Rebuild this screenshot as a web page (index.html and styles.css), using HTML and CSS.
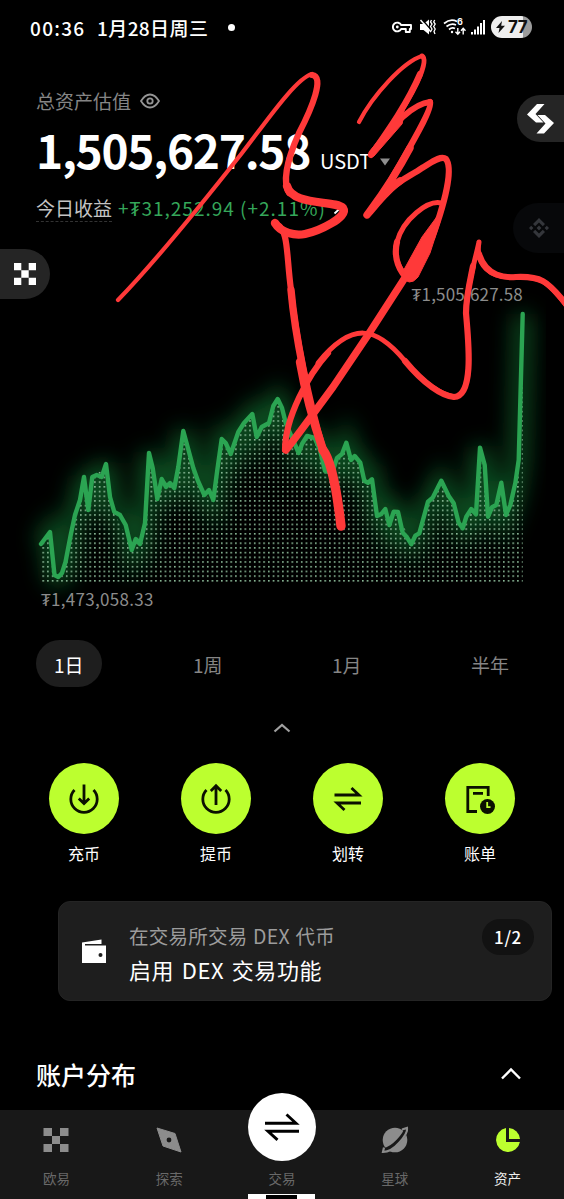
FILE: index.html
```html
<!DOCTYPE html>
<html lang="zh-CN">
<head>
<meta charset="UTF-8">
<meta name="viewport" content="width=device-width, initial-scale=1.0">
<title>资产</title>
<link rel="stylesheet" href="styles.css">
</head>
<body>
<div class="phone">

  <div class="status-bar">
    <span class="time">00:36</span>
    <span class="date">1月28日周三</span>
    <span class="dot"></span>
    <div class="status-icons">
      <svg class="key" width="20" height="14" viewBox="0 0 20 14" fill="none" stroke="#fff" stroke-width="1.9">
        <path d="M9.2 5H19V9H17.8V12H13.8V9H9.2A4.4 4.4 0 1 1 9.2 5Z" stroke-linejoin="round"/>
        <circle cx="5.3" cy="7" r="1.4" fill="#fff" stroke="none"/>
      </svg>
      <svg class="mute" width="18" height="18" viewBox="0 0 18 18">
        <path d="M1 6H4.5L10 1.5V16.5L4.5 12H1Z" fill="#fff"/>
        <path d="M2.500 1L14 14" stroke="#000" stroke-width="1.500"/>
        <path d="M1.500 2L12 14" stroke="#fff" stroke-width="1.500"/>
        <path d="M12.5 2L11.5 4L13 6L11.5 8.5L13 11L12 13M15.7 2L14.7 4L16.2 6L14.7 8.5L16.2 11L15 13.5L16 16" fill="none" stroke="#fff" stroke-width="1.3"/>
      </svg>
      <svg class="wifi" width="24" height="18" viewBox="0 0 24 18" fill="none" stroke="#fff" stroke-width="1.7">
        <path d="M1 5.5Q7.500 0 14 3.500M3.500 8.500Q8.500 4.500 13 7M6 11.500Q9 9 12 10.500"/>
        <circle cx="9" cy="14" r="1.200" fill="#fff" stroke="none"/>
        <path d="M14.800 10V16M12.500 13.800L14.800 16.200L17 13.800M20.200 16.500V10.500M18 12.700L20.200 10.300L22.500 12.700" stroke-width="1.400"/>
      </svg>
      <span class="wifi-gen">6</span>
      <svg class="signal" width="15" height="16" viewBox="0 0 15 16" fill="#fff">
        <rect x="0" y="13" width="2" height="2.500"/>
        <rect x="3" y="10.500" width="2" height="5"/>
        <rect x="6" y="7.500" width="2" height="8"/>
        <rect x="9" y="4" width="2" height="11.500"/>
        <rect x="12" y="1" width="2" height="14.500"/>
      </svg>
      <div class="battery">
        <svg width="9" height="12" viewBox="0 0 9 12"><path d="M6 0L0 7H3.500L2.500 12L9 4.800H5.200Z" fill="#111"/></svg>
        <span>77</span>
      </div>
    </div>
  </div>

  <div class="summary">
    <div class="summary-title">
      <span>总资产估值</span>
      <svg width="20" height="16" viewBox="0 0 20 16" fill="none" stroke="#959595" stroke-width="1.8">
        <path d="M1 8Q5 1.500 10 1.500T19 8Q15 14.500 10 14.500T1 8Z"/>
        <circle cx="10" cy="8" r="2.700"/>
      </svg>
    </div>
    <div class="total">
      <span class="amount">1,505,627.58</span>
      <span class="currency">USDT</span>
      <svg width="10" height="8" viewBox="0 0 10 8"><path d="M0 0.500H10L5 7.500Z" fill="#8e8e8e"/></svg>
    </div>
    <div class="income">
      <span class="income-label">今日收益</span>
      <span class="income-value">+₮31,252.94 (+2.11%)</span>
      <svg width="12" height="14" viewBox="0 0 12 14" fill="none" stroke="#fff" stroke-width="1.800"><path d="M4 1L9.500 6L3.500 11.500"/></svg>
    </div>
  </div>

  <div class="chart">
    <div class="chart-max">₮1,505,627.58</div>
    <svg width="564" height="282" viewBox="0 306 564 282">
      <defs>
        <pattern id="dots" x="42.400" y="580" width="4.700" height="4.700" patternUnits="userSpaceOnUse">
          <rect width="1.600" height="1.600" fill="#8dbd9a"/>
        </pattern>
        <filter id="glow" x="0" y="250" width="546" height="360" filterUnits="userSpaceOnUse">
          <feGaussianBlur stdDeviation="11"/>
        </filter>
        <path id="line" d="M41 544L50 532L54.500 575L58.300 577L62 573L65.500 562L70.700 535L75 515L80 500L84 477L88.300 510L92.300 477L96.700 475L101.700 477L106 464L110 497L114.300 512L120 515L125.700 525L131.700 550L135.700 539L140 544L145 523L149 453L152.700 468L157.300 499L161.700 479L166 487L170 483L174.300 488L178.300 467L183.300 431L193.300 468L198 481L204.300 495L209 490L213.300 500L217.300 470L221.700 439L225.700 443L230.700 454L238.300 432L244 423L252.300 414L256.700 437L261.700 427L269 423L273.300 406L277.700 399L282 408L286 424L298.700 453L302 444L307 436L314.700 438L320 450L325 471L332 473L337 458L342 454L346.300 442.700L351 460L354.700 456L360.300 462.700L364.300 480.700L368 482.700L372 479.300L377 516L381.300 514L385.300 509L389.300 525L393.700 511.700L398 512L402.700 532.700L407 537.300L411.300 544.300L415.300 535.700L419.300 533.300L428 501.700L432.700 497.700L441.300 480.700L448.700 496L453.700 503.300L458.700 522.700L462.700 528.300L466.300 516.700L471.300 509L476 514.300L480 447.700L484.700 465L488 516.700L492 507.300L496.300 505L501.300 482.700L506 515L510.300 505L515.300 483.300L518.700 460L522.700 314"/>
        <clipPath id="area">
          <path d="M41 544L50 532L54.500 575L62 573L70.700 535L84 477L88.300 510L92.300 477L106 464L114.300 512L131.700 550L145 523L149 453L157.300 499L161.700 479L174.300 488L183.300 431L193.300 468L204.300 495L213.300 500L221.700 439L230.700 454L238.300 432L252.300 414L256.700 437L269 423L277.700 399L286 424L298.700 453L307 436L314.700 438L325 471L332 473L346.300 442.700L351 460L360.300 462.700L368 482.700L372 479.300L377 516L385.300 509L389.300 525L398 512L411.300 544.300L419.300 533.300L428 501.700L441.300 480.700L453.700 503.300L462.700 528.300L471.300 509L476 514.300L480 447.700L484.700 465L488 516.700L496.300 505L501.300 482.700L506 515L515.300 483.300L518.700 460L522.700 314V583H41Z"/>
        </clipPath>
      </defs>
      <use href="#line" class="line-glow" filter="url(#glow)"/>
      <rect x="41" y="306" width="483" height="278" fill="url(#dots)" clip-path="url(#area)"/>
      <use href="#line" class="line"/>
    </svg>
    <div class="chart-min">₮1,473,058.33</div>
  </div>

  <div class="tabs">
    <span class="tab active">1日</span>
    <span class="tab">1周</span>
    <span class="tab">1月</span>
    <span class="tab">半年</span>
  </div>

  <div class="collapse">
    <svg width="18" height="10" viewBox="0 0 18 10" fill="none" stroke="#a0a0a0" stroke-width="2.200"><path d="M1.500 8.500L9 2L16.500 8.500"/></svg>
  </div>

  <div class="actions">
    <div class="action">
      <div class="action-icon">
        <svg width="32" height="32" viewBox="0 0 32 32" fill="none" stroke="#0b1000" stroke-width="2.800">
          <path d="M6.500 7A13.200 13.200 0 1 0 25.500 7M16 1.500V20M10.800 15.500L16 20.600L21.200 15.500"/>
        </svg>
      </div>
      <span>充币</span>
    </div>
    <div class="action">
      <div class="action-icon">
        <svg width="32" height="32" viewBox="0 0 32 32" fill="none" stroke="#0b1000" stroke-width="2.800">
          <path d="M6.500 7A13.200 13.200 0 1 0 25.500 7M16 22V3M10.800 8L16 2.800L21.200 8"/>
        </svg>
      </div>
      <span>提币</span>
    </div>
    <div class="action">
      <div class="action-icon">
        <svg width="32" height="32" viewBox="0 0 32 32" fill="none" stroke="#0b1000" stroke-width="2.800">
          <path d="M2.500 12H27L19.500 5M29 20H5L12.500 27"/>
        </svg>
      </div>
      <span>划转</span>
    </div>
    <div class="action">
      <div class="action-icon">
        <svg width="32" height="32" viewBox="0 0 32 32" fill="none" stroke="#0b1000" stroke-width="2.800">
          <path d="M13 28.500H3.800V4.300H24.200V13M9 10.300H19"/>
          <circle cx="23.500" cy="23.500" r="7.500" fill="#0b1000" stroke="none"/>
          <path d="M23.200 19V24.200H26.500" stroke="#bcff2f" stroke-width="1.800"/>
        </svg>
      </div>
      <span>账单</span>
    </div>
  </div>

  <div class="notice">
    <svg class="wallet" width="26" height="26" viewBox="0 0 26 26">
      <path d="M1 4.500L20.500 1.500V6H4V7.500H25V25H1Z" fill="#fff"/>
      <circle cx="19.500" cy="17" r="2" fill="#1e1e1e"/>
    </svg>
    <div class="notice-text">
      <p class="notice-sub">在交易所交易 DEX 代币</p>
      <p class="notice-main">启用 DEX 交易功能</p>
    </div>
    <span class="notice-page">1/2</span>
  </div>

  <div class="section-head">
    <h2>账户分布</h2>
    <svg width="20" height="13" viewBox="0 0 20 13" fill="none" stroke="#fff" stroke-width="2.400"><path d="M1 11.500L10 2.500L19 11.500"/></svg>
  </div>

  <div class="nav">
    <div class="nav-item">
      <svg width="26" height="26" viewBox="0 0 26 26" fill="#8c8c8c">
        <path d="M.5 1H9V9H.5ZM17 1H25.500V9H17ZM9 9H17V17H9ZM.5 17H9V25H.5ZM17 17H25.500V25H17Z"/>
      </svg>
      <span>欧易</span>
    </div>
    <div class="nav-item">
      <svg width="26" height="26" viewBox="0 0 26 26">
        <path d="M1 1L19 6.500L25 25L7 19Z" fill="#8c8c8c" stroke="#8c8c8c" stroke-linejoin="round"/>
        <circle cx="13" cy="13" r="2.400" fill="#181818"/>
      </svg>
      <span>探索</span>
    </div>
    <div class="nav-item">
      <div class="trade">
        <svg width="36" height="32" viewBox="0 0 36 32" fill="none" stroke="#000" stroke-width="2.900">
          <path d="M1 12.300H32L22.500 3.500M35 20.300H4L13.500 28.800"/>
        </svg>
      </div>
      <span>交易</span>
    </div>
    <div class="nav-item">
      <svg width="30" height="30" viewBox="0 0 30 30">
        <circle cx="15" cy="15" r="12.300" fill="#8c8c8c"/>
        <path d="M23 5L26 4Q26 8 18.500 16T3.500 25.500" fill="none" stroke="#181818" stroke-width="4.500"/>
        <path d="M22 4.500L27 3Q28 8 19.500 17.500T3 27L4 22.500" fill="none" stroke="#8c8c8c" stroke-width="2.200"/>
      </svg>
      <span>星球</span>
    </div>
    <div class="nav-item selected">
      <svg width="26" height="26" viewBox="0 0 26 26" fill="#bcff2f">
        <path d="M11 1.100V15H24.900A12 12 0 1 1 11 1.100Z"/>
        <path d="M14 1A12 12 0 0 1 25 12H14Z"/>
      </svg>
      <span>资产</span>
    </div>
    <div class="nav-edge"></div>
  </div>

  <!-- floating app shortcuts -->
  <div class="bubble bubble-bitget">
    <svg width="27" height="30" viewBox="0 0 27 30" fill="#fff">
      <path d="M10 0H17.500L8.500 10L16.500 18.500H9L0 10.500Z"/>
      <path d="M17 29.500H9.500L18.500 19.500L10.500 11H18L27 19Z"/>
    </svg>
  </div>
  <div class="bubble bubble-binance">
    <svg width="20" height="20" viewBox="0 0 20 20" fill="#34363b">
      <path d="M10 0L16 6L13.800 8.200L10 4.400L6.200 8.200L4 6ZM10 20L4 14L6.200 11.800L10 15.600L13.800 11.800L16 14ZM10 7.600L12.400 10L10 12.400L7.600 10ZM2.200 7.800L4.400 10L2.200 12.200L0 10ZM17.800 7.800L20 10L17.800 12.200L15.600 10Z"/>
    </svg>
  </div>
  <div class="bubble bubble-okx">
    <svg width="22" height="22" viewBox="0 0 22 22" fill="#fff">
      <path d="M0 0H7.300V7.300H0ZM14.700 0H22V7.300H14.700ZM7.300 7.300H14.700V14.700H7.300ZM0 14.700H7.300V22H0ZM14.700 14.700H22V22H14.700Z"/>
    </svg>
  </div>

  <!-- hand drawn marker strokes -->
  <svg class="marker" width="564" height="1199" viewBox="0 0 564 1199">
    <path class="w3" d="M118 300C155 262 205 200 242 153C266 122 296 78 312 74"/>
    <path class="w5" d="M312 75C325 76 312 108 299 133C286 162 283 183 289 193"/>
    <path class="w7" d="M287 186C292 206 335 200 343 208C349 217 319 231 305 234C295 236 281 233 275 223"/>
    <path class="w5" d="M276 224C289 230 286 253 291 290C294 322 300 353 307 387"/>
    <path class="w6" d="M291 290C295 335 308 400 323 450"/>
    <path class="w7" d="M300 362C304 385 312 418 323 450"/>
    <path class="w8" d="M323 450C333 463 338 500 341 526"/>
    <path class="w3" d="M359 122C373 95 403 62 422 56"/>
    <path class="w4" d="M422 56C431 61 410 98 392 126"/>
    <path class="w5" d="M420 74C408 102 390 128 371 155C389 129 411 104 430 102"/>
    <path class="fill" d="M404 109L369 152Q368 158 374 156L402 124Z"/>
    <path class="w5" d="M430 102C434 109 396 170 387 187"/>
    <path class="w6" d="M410 148C392 182 375 204 367 215C375 206 387 190 400 181"/>
    <path class="w5" d="M386 194C398 180 411 176 422 168C432 162 441 155 446 159C455 171 440 216 432 238"/>
    <path class="w4" d="M441 203C428 200 403 219 397 242C392 260 403 275 410 277"/>
    <path class="w5" d="M397 242C393 258 400 273 408 278"/>
    <path class="fill" d="M436 218L422 237L401 275Q409 288 418 277L430 253L440 222Z"/>
    <path class="w6" d="M408 273L368 335L333 387C316 410 298 435 286 450"/>
    <path class="w5" d="M285 450C285 418 308 375 328 353"/>
    <path class="w4" d="M318 363C352 321 376 326 405 361C424 384 442 395 454 397"/>
    <path class="w5" d="M405 361C424 384 442 396 454 397C475 396 468 338 466 313C466 297 470 281 473 266"/>
    <path class="w4" d="M466 313C466 289 475 261 479 242C475 265 490 279 516 277C540 276 547 280 566 305"/>
    <path class="w5" d="M479 254C486 277 506 278 516 277C540 276 547 280 566 304"/>
  </svg>

</div>
</body>
</html>
```
FILE: styles.css
```css
body, html {
  margin: 0;
  background-color: #000;
  font-family: "Noto Sans CJK SC", "Noto Sans", sans-serif;
}

.phone {
  position: relative;
  width: 564px;
  height: 1199px;
  overflow: hidden;
  background-color: #000;
  color: #fff;
}

svg {
  display: block;
  flex-shrink: 0;
}

/* status bar */
.status-bar {
  display: flex;
  align-items: center;
  box-sizing: border-box;
  height: 54px;
  padding: 0 32px 0 30px;
  font-size: 19px;
  font-weight: 500;
  white-space: nowrap;
}

.time {
  width: 67px;
  letter-spacing: 1.3px;
}

.date {
  width: 131px;
  letter-spacing: 0.4px;
}

.dot {
  width: 7px;
  height: 7px;
  border-radius: 50%;
  background-color: #fff;
}

.status-icons {
  display: flex;
  align-items: center;
  margin-left: auto;
}

.mute {
  margin-left: 7px;
}

.wifi {
  margin-left: 6px;
}

.wifi-gen {
  width: 6px;
  margin: -10px 4px 0 -10px;
  font-family: "Inter", sans-serif;
  font-size: 9px;
  font-weight: 700;
  line-height: 12px;
}

.signal {
  margin-left: 4px;
}

.battery {
  display: flex;
  align-items: center;
  justify-content: center;
  gap: 3px;
  width: 41px;
  height: 22px;
  margin-left: 5px;
  border-radius: 11px;
  background: linear-gradient(90deg, #eee 77%, #9b9b9b 77%);
  color: #111;
  font-family: "Inter", sans-serif;
  font-size: 17px;
  font-weight: 700;
  line-height: 22px;
  letter-spacing: -0.5px;
}

/* total assets */
.summary {
  height: 228px;
  box-sizing: border-box;
  padding: 36px 36px 0;
}

.summary-title {
  display: flex;
  align-items: center;
  gap: 9px;
  height: 22px;
  font-size: 19px;
  line-height: 22px;
  color: #858585;
}

.total {
  display: flex;
  align-items: center;
  height: 64px;
  margin-top: 8px;
}

.amount {
  width: 284px;
  padding-bottom: 5px;
  font-size: 46px;
  font-weight: 700;
  line-height: 59px;
  letter-spacing: -1.25px;
}

.currency {
  width: 60px;
  font-size: 20px;
  line-height: 24px;
  padding-top: 18px;
}

.total svg {
  margin-top: 19px;
}

.income {
  display: flex;
  align-items: center;
  height: 26px;
  margin-top: 12px;
  font-size: 19px;
  line-height: 26px;
}

.income-label {
  height: 25px;
  width: 76px;
  margin-right: 6px;
  color: #c4c4c4;
  border-bottom: 1px dashed #333;
  line-height: 24px;
}

.income-value {
  width: 213px;
  color: #35a75a;
  letter-spacing: 1px;
  line-height: 24px;
  padding-bottom: 2px;
  white-space: nowrap;
}

/* chart */
.chart {
  height: 332px;
  font-size: 17px;
  line-height: 24px;
  color: #8c8c8c;
}

.chart svg {
  overflow: visible;
}

.chart-max {
  padding-right: 41px;
  text-align: right;
  letter-spacing: 0.2px;
}

.chart-min {
  margin-top: -1px;
  padding-left: 41px;
  letter-spacing: 0.3px;
}

.line {
  fill: none;
  stroke: #2ba452;
  stroke-width: 4.4;
  stroke-linejoin: round;
  stroke-linecap: round;
}

.line-glow {
  fill: none;
  stroke: #15903c;
  stroke-width: 18;
  opacity: 0.55;
}

/* period tabs */
.tabs {
  display: flex;
  justify-content: space-between;
  padding: 26px 37px 0 36px;
}

.tab {
  height: 47px;
  padding: 0 18px;
  border-radius: 24px;
  font-size: 19px;
  line-height: 49px;
  color: #858585;
}

.tab.active {
  background-color: #1e1e1e;
  color: #fff;
}

.collapse {
  display: flex;
  justify-content: center;
  padding-top: 36px;
  height: 40px;
}

/* round buttons */
.actions {
  display: flex;
  padding: 0 18px;
}

.action {
  display: flex;
  flex-direction: column;
  align-items: center;
  width: 132px;
  font-size: 16px;
  line-height: 24px;
}

.action-icon {
  display: flex;
  align-items: center;
  justify-content: center;
  width: 70px;
  height: 71px;
  margin-bottom: 7px;
  border-radius: 50%;
  background-color: #bcff2f;
}

/* notice card */
.notice {
  display: flex;
  align-items: center;
  box-sizing: border-box;
  width: 494px;
  height: 100px;
  margin: 36px 0 0 58px;
  padding: 0 17px 0 22px;
  border: 1px solid #242424;
  border-radius: 12px;
  background-color: #1e1e1e;
}

.notice-text {
  margin-left: 22px;
  padding-top: 3px;
}

.notice-text p {
  margin: 0;
}

.notice-sub {
  font-size: 19.5px;
  line-height: 34px;
  letter-spacing: 0.25px;
  word-spacing: 1px;
  color: #9c9c9c;
}

.notice-main {
  font-size: 22px;
  line-height: 33px;
  letter-spacing: 0.6px;
  word-spacing: 2px;
}

.notice-page {
  align-self: flex-start;
  width: 52px;
  height: 36px;
  margin-top: 17px;
  margin-left: auto;
  border-radius: 18px;
  background-color: #121212;
  font-size: 17px;
  font-weight: 500;
  line-height: 36px;
  letter-spacing: 0.6px;
  text-align: center;
}

.section-head {
  display: flex;
  align-items: center;
  justify-content: space-between;
  height: 109px;
  box-sizing: border-box;
  padding: 36px 43px 0 36px;
}

.section-head h2 {
  margin: 0;
  font-size: 25px;
  font-weight: 500;
  line-height: 36px;
}

/* bottom navigation */
.nav {
  position: relative;
  display: flex;
  height: 89px;
  background-color: #181818;
}

.nav-item {
  display: flex;
  flex-direction: column;
  align-items: center;
  justify-content: flex-end;
  flex: 1;
  height: 78px;
  font-size: 13.5px;
  line-height: 20px;
  color: #696969;
}

.nav-item svg {
  margin-bottom: 15px;
}

.nav-item:nth-child(4) svg {
  margin-bottom: 13px;
}

.nav-item.selected {
  color: #eee;
}

.trade {
  display: flex;
  align-items: center;
  justify-content: center;
  flex-shrink: 0;
  width: 68px;
  height: 68px;
  margin-bottom: 7px;
  border-radius: 50%;
  background-color: #fff;
}

.nav-item .trade svg {
  margin: 0;
}

.nav-edge {
  position: absolute;
  left: 248px;
  bottom: 0;
  width: 67px;
  height: 5px;
  background: linear-gradient(90deg, #fff 27%, #000 27%, #000 73%, #fff 73%);
  border-top: 1px solid #fff;
  box-sizing: border-box;
}

/* floating bubbles */
.bubble {
  position: absolute;
  display: flex;
  align-items: center;
  box-sizing: border-box;
}

.bubble-bitget {
  top: 95px;
  right: 0;
  width: 47px;
  height: 47px;
  padding-left: 10px;
  border-radius: 24px 0 0 24px;
  background-color: #252525;
}

.bubble-binance {
  top: 203px;
  right: 0;
  width: 51px;
  height: 50px;
  padding-left: 16px;
  border-radius: 25px 0 0 25px;
  background-color: #07080a;
}

.bubble-okx {
  top: 249px;
  left: 0;
  width: 50px;
  height: 50px;
  padding-left: 14px;
  border-radius: 0 25px 25px 0;
  background-color: #252525;
}

/* marker */
.marker {
  position: absolute;
  top: 0;
  left: 0;
  fill: none;
  stroke: #ff3939;
  stroke-linecap: round;
  stroke-linejoin: round;
  pointer-events: none;
}

.marker .fill {
  fill: #ff3939;
  stroke-width: 1;
}

.w3 { stroke-width: 4.2; }
.w4 { stroke-width: 5; }
.w5 { stroke-width: 6.2; }
.w6 { stroke-width: 7.4; }
.w7 { stroke-width: 8.4; }
.w8 { stroke-width: 9.4; }
```
